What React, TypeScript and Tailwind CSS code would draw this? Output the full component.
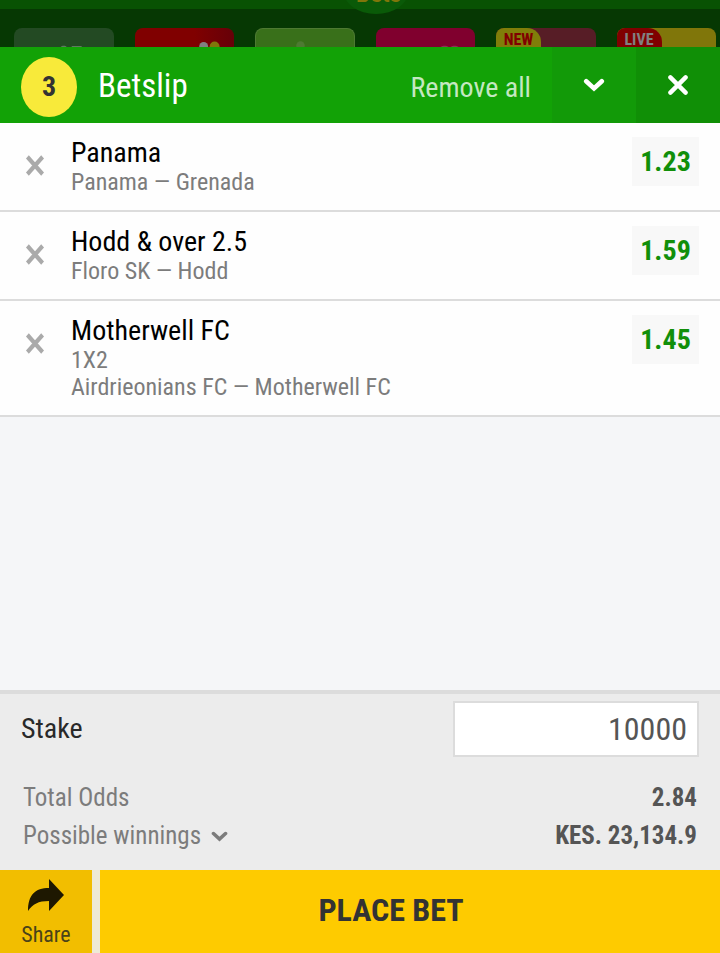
import type { ReactNode } from 'react';

type Selection = { pick: string; lines: string[]; odds: string };

const selections: Selection[] = [
  { pick: 'Panama', lines: ['Panama — Grenada'], odds: '1.23' },
  { pick: 'Hodd & over 2.5', lines: ['Floro SK — Hodd'], odds: '1.59' },
  { pick: 'Motherwell FC', lines: ['1X2', 'Airdrieonians FC — Motherwell FC'], odds: '1.45' }
];

const Tile = ({ className, children }: { className: string; children?: ReactNode }) => (
  <div className={`h-[19px] rounded-t-lg ${className}`}>{children}</div>
);

// artwork peeking out at the bottom edge of a tile
const TileArt = ({ children }: { children: ReactNode }) => (
  <svg viewBox="0 0 100 19" className="block h-full w-full" aria-hidden>{children}</svg>
);

const Badge = ({ className, children }: { className: string; children: ReactNode }) => (
  <span className={`block h-full w-[45px] rounded-tl-lg rounded-tr-[14px] pt-[5px] text-center text-[16px] font-bold leading-[14px] ${className}`}>{children}</span>
);

const Cross = ({ className }: { className: string }) => (
  <svg viewBox="0 0 20 20" className={className} fill="none" stroke="currentColor" preserveAspectRatio="none" aria-hidden>
    <path d="M2.4 2.4 17.6 17.6M17.6 2.4 2.4 17.6" />
  </svg>
);

const Chevron = ({ className }: { className: string }) => (
  <svg viewBox="0 0 22 14" className={className} fill="none" stroke="currentColor" strokeWidth={4.6} strokeLinecap="round" aria-hidden>
    <path d="M3.2 3.2 11 10.4 18.8 3.2" />
  </svg>
);

const Backdrop = () => (
  <div className="overflow-hidden bg-[#063803]">
    <div className="relative h-[9px] bg-[#085203]">
      <svg viewBox="0 0 80 14" className="absolute left-1/2 top-0 ml-[-24px] h-[14px] w-20" aria-hidden>
        <ellipse cx="40" cy="-10" rx="33" ry="24" fill="#0a5a08" />
      </svg>
      <span className="absolute -top-[21px] left-1/2 ml-[-4px] text-[25px] font-bold leading-[30px] text-[#80760a]">Bets</span>
    </div>
    <div className="grid grid-cols-6 gap-x-[21px] pl-[14px] pr-1 pt-[19px]">
      <Tile className="bg-[#234a23]">
        <TileArt>
          <path d="M47 19C48 17.5 52 17.5 53 19ZM58 18H68V19H58Z" fill="#5f7a5f" />
        </TileArt>
      </Tile>
      <Tile className="bg-linear-to-r from-[#800000] from-60% to-[#660008]">
        <TileArt>
          <circle cx="69" cy="18.5" r="4.5" fill="#808080" />
          <circle cx="80" cy="18.5" r="5" fill="#80760a" />
        </TileArt>
      </Tile>
      <Tile className="border border-b-0 border-[#4d7a32] bg-[#39701a]">
        <TileArt>
          <circle cx="45.5" cy="17.5" r="4.5" fill="#4d7a32" />
        </TileArt>
      </Tile>
      <Tile className="bg-[#80002e]">
        <TileArt>
          <path d="M65 19C67 17.5 71 17.5 73 19ZM75 19C77 17.5 81 17.5 83 19Z" fill="#8f3053" />
        </TileArt>
      </Tile>
      <Tile className="bg-[#571d26]">
        <Badge className="bg-[#807e09] text-[#800000]">NEW</Badge>
      </Tile>
      <Tile className="bg-[#80760a]">
        <Badge className="bg-[#800000] text-[#808080]">LIVE</Badge>
      </Tile>
    </div>
  </div>
);

const App = () => {
  return (
    <div className="flex min-h-screen flex-col bg-[#f5f6f8] font-['Roboto_Condensed',Roboto,sans-serif]">
      <Backdrop />

      <header className="flex h-[76px] items-stretch bg-[#12a206] text-white">
        <div className="flex flex-1 items-center px-[21px] pt-1">
          <span className="flex h-[60px] w-14 items-center justify-center rounded-[50%] bg-[#f8ea3a] text-[28px] font-bold text-[#333]">3</span>
          <h1 className="ml-[21px] pb-0.5 text-[33px]">Betslip</h1>
          <button type="button" className="ml-auto pt-px text-[28px] text-[#c4e8c1]">Remove all</button>
        </div>
        <button type="button" aria-label="Collapse" className="flex w-[84px] items-center justify-center bg-[#129a08]">
          <Chevron className="h-[14px] w-[22px]" />
        </button>
        <button type="button" aria-label="Close" className="flex w-[84px] items-center justify-center bg-[#108f06]">
          <Cross className="size-5 stroke-[4.4] [stroke-linecap:round]" />
        </button>
      </header>

      <ul>
        {selections.map((s) => (
          <li key={s.pick} className="flex items-start border-b-2 border-[#dcdcdc] bg-[#fefefe] py-[14px] pl-[25px] pr-[21px]">
            <button type="button" aria-label={`Remove ${s.pick}`} className="mt-[17px] text-[#aaa]">
              <Cross className="h-[23px] w-5 stroke-4" />
            </button>
            <div className="ml-[26px] flex-1">
              <h2 className="text-[28px] leading-8 text-black">{s.pick}</h2>
              {s.lines.map((line) => (
                <p key={line} className="text-[24px] leading-[27px] text-[#7c7c7c]">{line}</p>
              ))}
            </div>
            <span className="flex h-[49px] w-[67px] items-center justify-center bg-[#f8f8f8] text-[28px] font-bold text-[#118f0a]">{s.odds}</span>
          </li>
        ))}
      </ul>

      <footer className="mt-auto border-t-4 border-[#dcdcdc] bg-[#ececec]">
        <div className="flex items-center justify-between px-[21px] pt-[7px]">
          <label htmlFor="stake" className="text-[28px] text-[#292929]">Stake</label>
          <input id="stake" defaultValue="10000" inputMode="numeric" className="h-14 w-[246px] border-2 border-[#dcdcdc] bg-white px-[10px] text-right text-[32px] text-[#555]" />
        </div>
        <dl className="px-[23px] pb-[15px] pt-[22px] text-[25px] leading-[38px]">
          <div className="flex justify-between">
            <dt className="text-[#7c7c7c]">Total Odds</dt>
            <dd className="font-bold text-[#555]">2.84</dd>
          </div>
          <div className="flex justify-between">
            <dt className="flex items-center text-[#7c7c7c]">
              Possible winnings
              <Chevron className="ml-[10px] h-[11px] w-[17px]" />
            </dt>
            <dd className="font-bold text-[#555]">KES. 23,134.9</dd>
          </div>
        </dl>
        <div className="flex h-[83px] gap-2 bg-[#eeead6]">
          <button type="button" className="flex w-[92px] flex-col items-center gap-2 bg-[#f2be00] pt-[9px] text-[22px] leading-8 text-[#4a4319]">
            <svg viewBox="0 0 36 32" className="h-8 w-9 shrink-0" aria-hidden>
              <path d="M0 32C0 16 7 9 21 9V0L36 16 21 32V22C10 22 5 25 0 32Z" fill="#1e1801" />
            </svg>
            Share
          </button>
          <button type="button" className="flex-1 bg-[#fecb00] pb-1 pr-[38px] text-[32px] font-bold text-[#333]">PLACE BET</button>
        </div>
      </footer>
    </div>
  );
};

export default App;
